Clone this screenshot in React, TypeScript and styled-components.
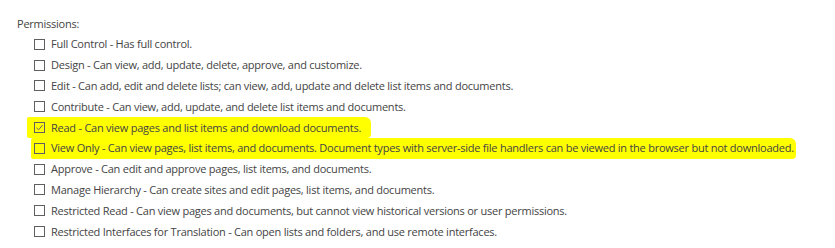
import React from "react";
import styled, { createGlobalStyle } from "styled-components";

const Global = createGlobalStyle`
  html, body { margin: 0; padding: 0; background: #ffffff; }
  body { font-family: "Open Sans", "Noto Sans", Arial, sans-serif; }
`;

const Page = styled.div`
  width: 835px;
  height: 248px;
  box-sizing: border-box;
  padding: 15px 0 0 17px;
  color: #444444;
  font-size: 11px;
  letter-spacing: -0.24px;
  overflow: hidden;
`;

const Label = styled.div`
  height: 18px;
  line-height: 18px;
  margin-bottom: 1px;
`;

const List = styled.div`
  display: flex;
  flex-direction: column;
  padding-left: 17px;
`;

const Row = styled.label<{ $hl?: "short" | "long" }>`
  display: flex;
  align-items: center;
  gap: 6px;
  height: 20.8px;
  width: fit-content;
  white-space: nowrap;
  box-sizing: border-box;
  background: ${(p) => (p.$hl ? "#ffff00" : "transparent")};
  margin-left: ${(p) => (p.$hl === "short" ? "-7px" : p.$hl === "long" ? "-3px" : "0")};
  padding-left: ${(p) => (p.$hl === "short" ? "7px" : p.$hl === "long" ? "3px" : "0")};
  padding-right: ${(p) => (p.$hl === "short" ? "10px" : p.$hl === "long" ? "2px" : "0")};
  border-radius: ${(p) => (p.$hl ? "2px 6px 4px 2px" : "0")};
`;

const Box = styled.span`
  width: 11px;
  height: 11px;
  box-sizing: border-box;
  border: 1px solid #5f5f5f;
  display: flex;
  align-items: center;
  justify-content: center;
  flex: none;
`;

const Text = styled.span`
  line-height: 20px;
`;

const perms: { text: string; checked?: boolean; hl?: "short" | "long" }[] = [
  { text: "Full Control - Has full control." },
  { text: "Design - Can view, add, update, delete, approve, and customize." },
  { text: "Edit - Can add, edit and delete lists; can view, add, update and delete list items and documents." },
  { text: "Contribute - Can view, add, update, and delete list items and documents." },
  { text: "Read - Can view pages and list items and download documents.", checked: true, hl: "short" },
  {
    text: "View Only - Can view pages, list items, and documents. Document types with server-side file handlers can be viewed in the browser but not downloaded.",
    hl: "long",
  },
  { text: "Approve - Can edit and approve pages, list items, and documents." },
  { text: "Manage Hierarchy - Can create sites and edit pages, list items, and documents." },
  { text: "Restricted Read - Can view pages and documents, but cannot view historical versions or user permissions." },
  { text: "Restricted Interfaces for Translation - Can open lists and folders, and use remote interfaces." },
];

export default function App() {
  return (
    <>
      <Global />
      <Page>
        <Label>Permissions:</Label>
        <List>
          {perms.map((p) => (
            <Row key={p.text} $hl={p.hl}>
              <Box>
                {p.checked && (
                  <svg width="9" height="9" viewBox="0 0 9 9">
                    <path d="M1.5 4.8 L3.6 6.8 L7.6 2" fill="none" stroke="#666" strokeWidth="1" />
                  </svg>
                )}
              </Box>
              <Text>{p.text}</Text>
            </Row>
          ))}
        </List>
      </Page>
    </>
  );
}
